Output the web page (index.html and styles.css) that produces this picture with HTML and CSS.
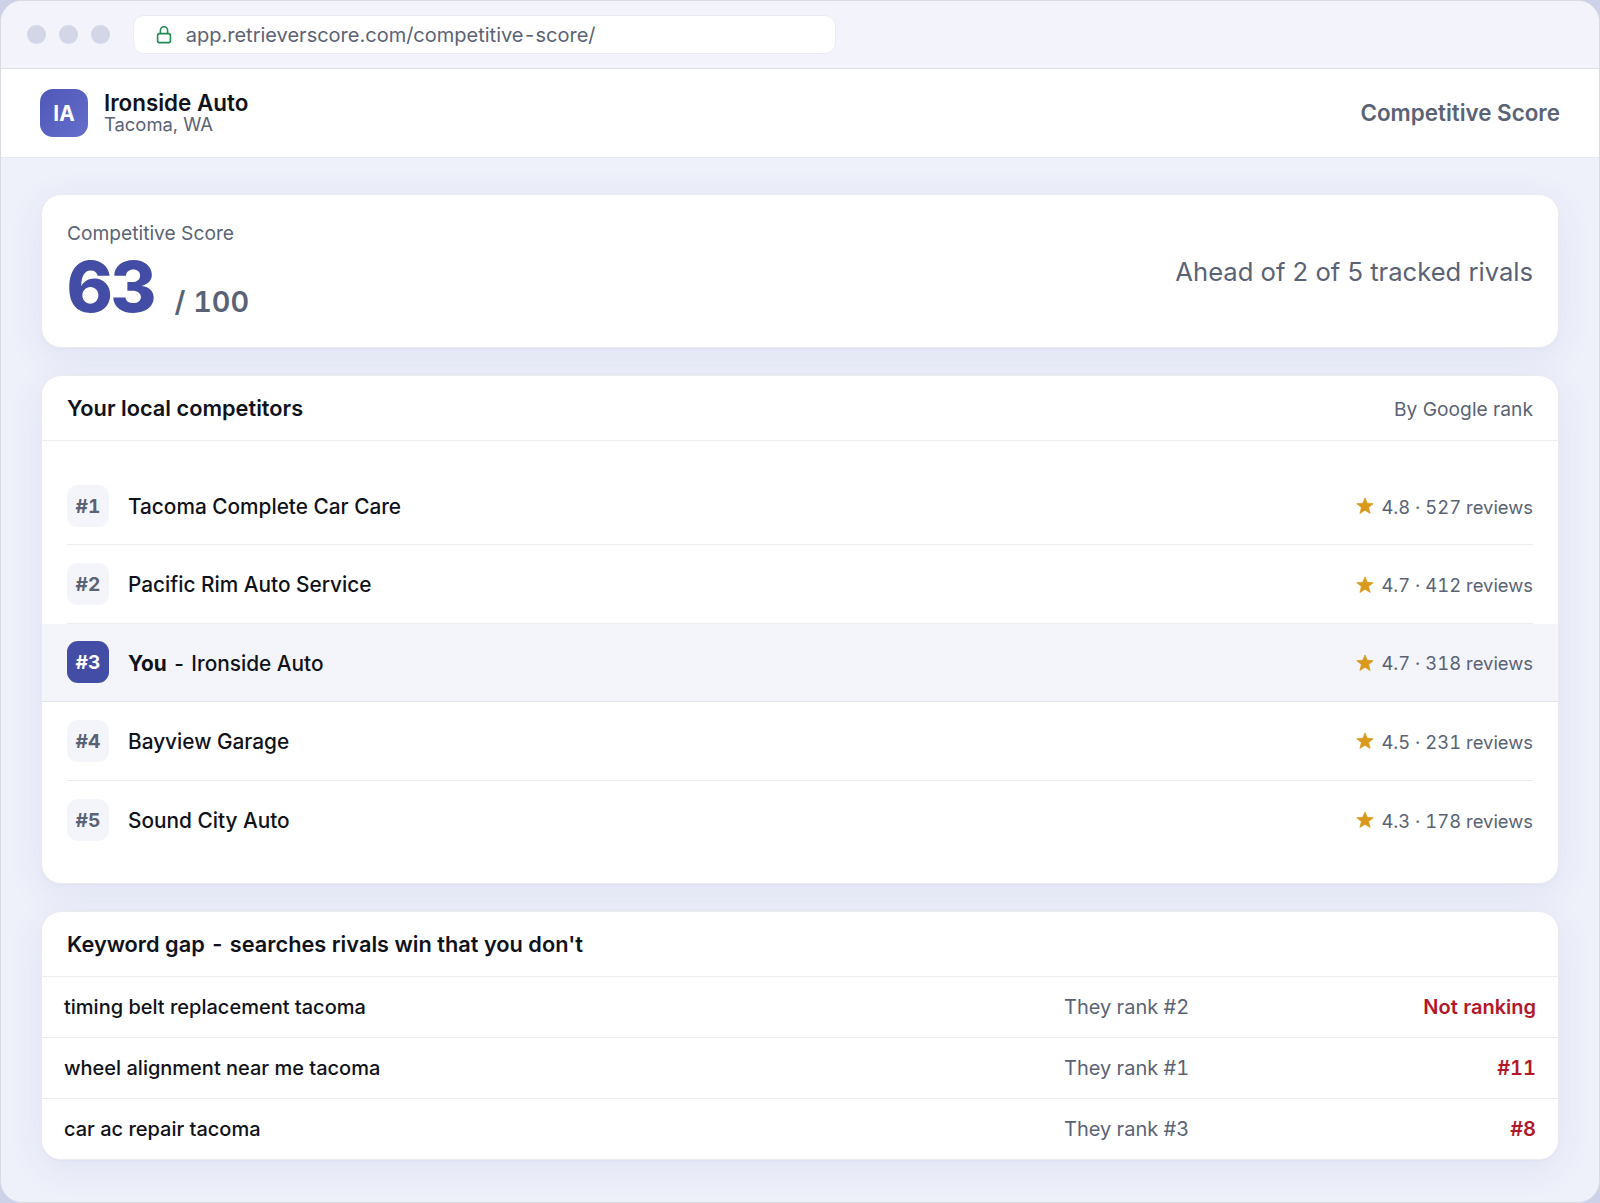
FILE: index.html
```html
<!DOCTYPE html>
<html lang="en">

<head>
    <meta charset="UTF-8">
    <title>Competitive Score</title>
    <link rel="stylesheet" href="styles.css">
</head>

<body>
    <svg class="sprite" width="0" height="0">
        <symbol id="star" viewBox="0 0 24 24">
            <path d="M12 1.2l2.9 7.1 8 .6-6.1 5.1 2 8L12 17.6 5.2 22l2-8L1.1 8.9l8-.6z" fill="currentColor" stroke="currentColor" stroke-width="1" stroke-linejoin="round"/>
        </symbol>
    </svg>
    <div class="window">
        <div class="chrome">
            <div class="dots">
                <span></span>
                <span></span>
                <span></span>
            </div>
            <div class="address">
                <svg class="lock" viewBox="0 0 16 18" fill="none" stroke="currentColor" stroke-width="1.6">
                    <rect x="1.6" y="7.6" width="12.8" height="9" rx="1.8"/>
                    <path d="M4.4 7.6V4.4a3.6 3.6 0 0 1 7.2 0v3.2"/>
                </svg>
                <span class="url">app.retrieverscore.com/competitive<i class="dash">-</i>score/</span>
            </div>
        </div>
        <header class="header">
            <div class="logo">IA</div>
            <div class="business">
                <div class="name">Ironside Auto</div>
                <div class="place">Tacoma, WA</div>
            </div>
            <div class="page-title">Competitive Score</div>
        </header>
        <main class="content">
            <section class="card score">
                <div>
                    <div class="label">Competitive Score</div>
                    <div class="value">63 <small>/ 100</small></div>
                </div>
                <div class="ahead">Ahead of 2 of 5 tracked rivals</div>
            </section>

            <section class="card">
                <div class="card-head">
                    <h2>Your local competitors</h2>
                    <span class="note">By Google rank</span>
                </div>
                <ul class="rivals">
                    <li>
                        <span class="rank">#1</span>
                        <span class="rival">Tacoma Complete Car Care</span>
                        <span class="reviews"><svg class="star"><use href="#star"/></svg>4.8 · 527 reviews</span>
                    </li>
                    <li>
                        <span class="rank">#2</span>
                        <span class="rival">Pacific Rim Auto Service</span>
                        <span class="reviews"><svg class="star"><use href="#star"/></svg>4.7 · 412 reviews</span>
                    </li>
                    <li class="you">
                        <span class="rank">#3</span>
                        <span class="rival"><b>You</b> <i class="dash">-</i> Ironside Auto</span>
                        <span class="reviews"><svg class="star"><use href="#star"/></svg>4.7 · 318 reviews</span>
                    </li>
                    <li>
                        <span class="rank">#4</span>
                        <span class="rival">Bayview Garage</span>
                        <span class="reviews"><svg class="star"><use href="#star"/></svg>4.5 · 231 reviews</span>
                    </li>
                    <li>
                        <span class="rank">#5</span>
                        <span class="rival">Sound City Auto</span>
                        <span class="reviews"><svg class="star"><use href="#star"/></svg>4.3 · 178 reviews</span>
                    </li>
                </ul>
            </section>

            <section class="card">
                <div class="card-head">
                    <h2>Keyword gap <i class="dash">-</i> searches rivals win that you don't</h2>
                </div>
                <ul class="keywords">
                    <li>
                        <span class="keyword">timing belt replacement tacoma</span>
                        <span class="theirs">They rank #2</span>
                        <span class="yours">Not ranking</span>
                    </li>
                    <li>
                        <span class="keyword">wheel alignment near me tacoma</span>
                        <span class="theirs">They rank #1</span>
                        <span class="yours">#11</span>
                    </li>
                    <li>
                        <span class="keyword">car ac repair tacoma</span>
                        <span class="theirs">They rank #3</span>
                        <span class="yours">#8</span>
                    </li>
                </ul>
            </section>
        </main>
    </div>
</body>

</html>
```

FILE: styles.css
```css
* {
    box-sizing: border-box;
}

html,
body {
    height: 100%;
    margin: 0;
    padding: 0;
}

body {
    background: #cdd2e8;
    color: #10121a;
    font-family: Inter, "Liberation Sans", sans-serif;
    font-size: 20px;
    line-height: 1.2;
}

ul,
h2 {
    margin: 0;
    padding: 0;
    list-style: none;
}

.sprite {
    position: absolute;
}

.dash {
    font-style: normal;
    margin: 0 2px;
}

.window {
    height: 100%;
    display: flex;
    flex-direction: column;
    border: 1px solid #d9dbe2;
    border-radius: 22px;
    background: #eef0fa;
    overflow: hidden;
}

/* browser bar */
.chrome {
    height: 68px;
    flex: none;
    display: flex;
    align-items: center;
    padding: 0 26px;
    background: #f2f3fb;
    border-bottom: 1px solid #dfe1e8;
}

.dots {
    display: flex;
    gap: 12.8px;
    margin-right: 22.6px;
}

.dots span {
    width: 19.2px;
    height: 19.2px;
    border-radius: 50%;
    background: #d2d6e7;
}

.address {
    width: 703px;
    height: 39px;
    display: flex;
    align-items: center;
    gap: 14px;
    padding: 0 22px;
    border: 1px solid #ebecf1;
    border-radius: 11px;
    background: #fff;
    color: #5a6375;
    font-size: 20px;
}

.url .dash {
    margin: 0 1.4px;
}

.lock {
    width: 16px;
    height: 18px;
    color: #1f8a52;
}

/* header */
.header {
    height: 89px;
    flex: none;
    display: flex;
    align-items: center;
    padding: 0 39px;
    background: #fff;
    border-bottom: 1px solid #e8e9ee;
}

.logo {
    width: 48px;
    height: 48px;
    margin-right: 16px;
    padding-top: 1px;
    border-radius: 13px;
    background: linear-gradient(135deg, #4f57b8, #656ecb);
    color: #fff;
    font-size: 20.8px;
    font-weight: 700;
    line-height: 48px;
    text-align: center;
}

.business {
    margin-top: -1px;
}

.name {
    font-size: 22.4px;
    font-weight: 600;
    line-height: 23px;
}

.place {
    color: #5a6375;
    font-size: 18.4px;
    line-height: 21px;
}

.page-title {
    margin-left: auto;
    padding-top: 1px;
    color: #5a6375;
    font-size: 22.4px;
    font-weight: 600;
}

/* cards */
.content {
    flex: 1;
    display: flex;
    flex-direction: column;
    gap: 27px;
    padding: 36px 40px 0;
}

.card {
    border: 1px solid #ebebef;
    border-radius: 20px;
    background: #fff;
    box-shadow: 0 1px 3px rgba(60, 70, 150, .04), 0 8px 36px rgba(68, 77, 166, .08);
}

.card-head {
    height: 65px;
    display: flex;
    align-items: center;
    justify-content: space-between;
    padding: 0 25px;
    border-bottom: 1px solid #ebecf0;
}

.card-head h2 {
    font-size: 21.75px;
    font-weight: 600;
}

.note {
    padding-top: 3px;
    color: #5a6375;
    font-size: 19.2px;
}

.score {
    height: 154px;
    display: flex;
    align-items: center;
    justify-content: space-between;
    padding: 0 25px;
}

.label {
    color: #5a6375;
    font-size: 19.2px;
    line-height: 20px;
}

.value {
    margin-bottom: -3px;
    padding-top: 9px;
    color: #444da6;
    font-size: 70.4px;
    font-weight: 800;
    line-height: 1;
    letter-spacing: -1.4px;
    font-variant-numeric: tabular-nums;
}

.value small {
    margin-left: 2px;
    color: #5a6375;
    font-size: 28.8px;
    font-weight: 600;
    letter-spacing: 0;
}

.ahead {
    padding-top: 3px;
    color: #5a6375;
    font-size: 25.6px;
}

/* competitors */
.rivals {
    padding: 26px 25px 24px;
}

.rivals li {
    height: 78.4px;
    display: flex;
    align-items: center;
    border-bottom: 1px solid #ebecf0;
}

.rivals li:last-child {
    border-bottom: 0;
}

.rivals .you {
    margin: 0 -25px;
    padding: 0 25px;
    background: #f4f5fb;
    border-color: #e0e2ea;
}

.rank {
    width: 42px;
    height: 42px;
    margin-right: 19px;
    border-radius: 11px;
    background: #f4f5fb;
    color: #5a6375;
    font-size: 19.2px;
    font-weight: 700;
    line-height: 43px;
    text-align: center;
    font-variant-numeric: tabular-nums;
}

.you .rank {
    background: #444da6;
    color: #fff;
}

.rival {
    padding-top: 3px;
    font-size: 20.8px;
    font-weight: 500;
}

.reviews {
    display: flex;
    align-items: center;
    margin-left: auto;
    padding-top: 2px;
    color: #5a6375;
    font-size: 18.4px;
    font-variant-numeric: tabular-nums;
}

.star {
    width: 18px;
    height: 18px;
    margin: -1px 7px 0 0;
    color: #d99a1c;
}

/* keyword gap */
.keywords li {
    height: 61px;
    display: grid;
    grid-template-columns: 1fr 236px 236px;
    align-items: center;
    padding: 0 22px;
    border-bottom: 1px solid #ebecf0;
}

.keywords li:last-child {
    height: 60px;
    border-bottom: 0;
}

.keyword {
    font-weight: 500;
}

.theirs {
    color: #5a6375;
    font-variant-numeric: tabular-nums;
}

.yours {
    color: #b3182a;
    font-weight: 600;
    text-align: right;
    font-variant-numeric: tabular-nums;
}
```
